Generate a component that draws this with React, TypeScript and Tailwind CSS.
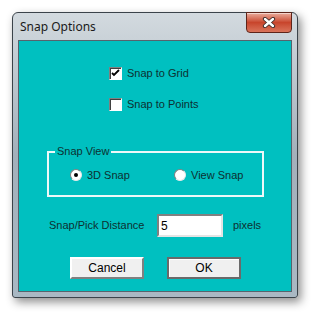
import { useState } from 'react'

const ui = { fontFamily: '"Liberation Sans", Arial, sans-serif' }

function CheckBox({ checked }: { checked: boolean }) {
  return (
    <div className="w-[13px] h-[13px] bg-white border border-t-[#808080] border-l-[#808080] border-r-white border-b-white shadow-[inset_1px_1px_0_#404040] flex items-center justify-center">
      {checked && (
        <svg width="9" height="9" viewBox="0 0 9 9">
          <path d="M1 4 L3 6 L8 1" stroke="#000" strokeWidth="1.8" fill="none" />
        </svg>
      )}
    </div>
  )
}

function Radio({ checked }: { checked: boolean }) {
  return (
    <div className="w-[12px] h-[12px] rounded-full bg-white border border-t-[#808080] border-l-[#808080] border-r-[#e8e8e8] border-b-[#e8e8e8] flex items-center justify-center">
      {checked && <div className="w-[4px] h-[4px] rounded-full bg-black" />}
    </div>
  )
}

export default function App() {
  const [grid, setGrid] = useState(true)
  const [points, setPoints] = useState(false)
  const [view, setView] = useState<'3d' | 'view'>('3d')
  const [dist, setDist] = useState('5')

  return (
    <div className="w-[318px] h-[319px] bg-white pt-[12px] pl-[12px] overflow-hidden">
      {/* 窗口 */}
      <div className="relative w-[286px] h-[286px] rounded-t-[6px] rounded-b-[3px] border border-[#3b434a] bg-gradient-to-b from-[#d3dadf] via-[#a3b0ba] to-[#a9b8c3] shadow-[3px_4px_10px_rgba(0,0,0,0.45)] flex flex-col">
        <div
          className="h-[28px] pl-[7px] pb-[1px] flex items-center text-[12px] text-[#1a1a1a]"
          style={{ fontFamily: '"Noto Sans", "Open Sans", sans-serif' }}
        >
          Snap Options
        </div>

        {/* 关闭按钮 */}
        <div className="absolute top-[-1px] right-[5px] w-[46px] h-[21px] rounded-b-[4px] border border-[#5e2419] bg-gradient-to-b from-[#e9ab9c] via-[#c8452c] to-[#d9735a] shadow-[inset_0_1px_0_rgba(255,255,255,0.5)] flex items-center justify-center">
          <svg width="14" height="11" viewBox="0 0 14 11">
            <path d="M3 2 L11 9 M11 2 L3 9" stroke="#3a2a28" strokeWidth="4.2" strokeLinecap="round" />
            <path d="M3 2 L11 9 M11 2 L3 9" stroke="#fff" strokeWidth="2.4" strokeLinecap="round" />
          </svg>
        </div>

        <div className="px-[6px]">
          <div
            className="w-[272px] h-[250px] bg-[#00c0c0] ring-1 ring-[#56636d] flex flex-col pt-[26px] text-[11px] text-[#0d3131]"
            style={ui}
          >
            <div className="ml-[90px] h-[13px] flex items-center gap-[5px]" onClick={() => setGrid(!grid)}>
              <CheckBox checked={grid} />
              <span>Snap to Grid</span>
            </div>
            <div className="ml-[90px] mt-[18px] h-[13px] flex items-center gap-[5px]" onClick={() => setPoints(!points)}>
              <CheckBox checked={points} />
              <span>Snap to Points</span>
            </div>

            {/* Snap View 分组 */}
            <fieldset className="ml-[28px] mt-[34px] w-[217px] border-2 border-[#eef8f8] px-[6px] pt-[11px] pb-[14px]">
              <legend className="px-[2px] leading-[13px]">Snap View</legend>
              <div className="pl-[15px] h-[12px] flex items-center">
                <div className="w-[104px] flex items-center gap-[5px]" onClick={() => setView('3d')}>
                  <Radio checked={view === '3d'} />
                  <span>3D Snap</span>
                </div>
                <div className="flex items-center gap-[5px]" onClick={() => setView('view')}>
                  <Radio checked={view === 'view'} />
                  <span>View Snap</span>
                </div>
              </div>
            </fieldset>

            <div className="mt-[17px] h-[23px] flex items-center">
              <span className="ml-[30px] w-[108px]">Snap/Pick Distance</span>
              <input
                value={dist}
                onChange={(e) => setDist(e.target.value)}
                className="w-[66px] h-[23px] bg-white border-2 border-t-[#808080] border-l-[#808080] border-r-[#e4e4e4] border-b-[#e4e4e4] px-[2px] text-[12px] text-black outline-none"
                style={ui}
              />
              <span className="ml-[10px]">pixels</span>
            </div>

            <div className="mt-[20px] ml-[51px] flex gap-[23px] text-black text-[12px]">
              <button className="w-[74px] h-[22px] bg-[#f0f0f0] border-2 border-t-white border-l-white border-r-[#808080] border-b-[#808080]">
                Cancel
              </button>
              <button className="w-[74px] h-[22px] bg-[#f0f0f0] border-2 border-t-[#6a6a6a] border-l-[#6a6a6a] border-r-[#6a6a6a] border-b-[#6a6a6a] shadow-[inset_1px_1px_0_#fff]">
                OK
              </button>
            </div>
          </div>
        </div>
      </div>
    </div>
  )
}
